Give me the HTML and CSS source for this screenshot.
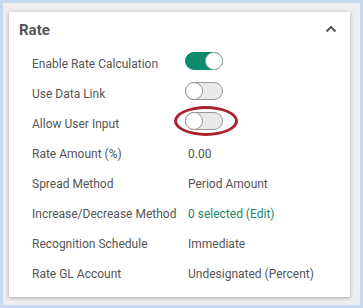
FILE: index.html
```html
<!doctype html>
<html>
	<head>
		<meta charset="utf-8" />
		<title>Rate</title>
		<link rel="stylesheet" href="styles.css">
	</head>
	<body>
		<div class="frame">
			<div class="card">
				<div class="card-head">
					<h2>Rate</h2>
					<svg class="chevron" width="12" height="8" viewBox="0 0 12 8"><path d="M1.5 6.5 L6 2 L10.5 6.5" fill="none" stroke="#555" stroke-width="2"/></svg>
				</div>
				<ul class="fields">
					<li><span class="label">Enable Rate Calculation</span><span class="value"><span class="toggle on"></span></span></li>
					<li><span class="label">Use Data Link</span><span class="value"><span class="toggle"></span></span></li>
					<li><span class="label">Allow User Input</span><span class="value"><span class="toggle"><span class="mark"></span></span></span></li>
					<li><span class="label">Rate Amount (%)</span><span class="value">0.00</span></li>
					<li><span class="label">Spread Method</span><span class="value">Period Amount</span></li>
					<li><span class="label">Increase/Decrease Method</span><span class="value"><a href="#" class="link">0 selected (Edit)</a></span></li>
					<li><span class="label">Recognition Schedule</span><span class="value">Immediate</span></li>
					<li><span class="label">Rate GL Account</span><span class="value">Undesignated (Percent)</span></li>
				</ul>
			</div>
		</div>
	</body>
</html>
```
FILE: styles.css
```css
html, body, div, h2, ul, li { margin: 0; padding: 0; }
li { list-style-type: none; }
a { text-decoration: none; }

body { background: #c6d9f1; padding: 3px; font-family: Roboto, "Liberation Sans", sans-serif; font-size: 12px; color: #555; }
.frame { background: #eeeeee; padding: 9px 10px 8px 6px; }
.card { background: #fff; box-shadow: 0 1px 4px rgba(0, 0, 0, 0.3); padding-bottom: 8px; }

.card-head { display: flex; align-items: center; justify-content: space-between; height: 37px; padding: 0 13px 0 10px; }
.card-head h2 { font-size: 15px; font-weight: bold; color: #555; margin-top: -1px; }
.chevron { display: block; margin-top: -3px; }

.fields li { display: flex; align-items: center; height: 30px; padding-left: 23px; }
.label { width: 156px; flex: none; color: #555; }
.value { color: #555; display: flex; align-items: center; }
.link { color: #17876d; }

.toggle { position: relative; display: block; width: 38px; height: 18px; margin: 0 0 7px -3px; box-sizing: border-box; border: 1px solid #999; border-radius: 9px; background: #e9e9e9; }
.toggle::after { content: ""; position: absolute; left: -1px; top: -1px; width: 18px; height: 18px; box-sizing: border-box; border: 1px solid #999; border-radius: 50%; background: #fff; }
.toggle.on { background: #0e8a6d; border-color: #0e8a6d; }
.toggle.on::after { left: auto; right: -1px; border-color: #aaa; }
.mark { position: absolute; left: -12px; top: -7px; width: 64px; height: 30px; box-sizing: border-box; border: 3px solid #a8232b; border-radius: 50%; }
```
